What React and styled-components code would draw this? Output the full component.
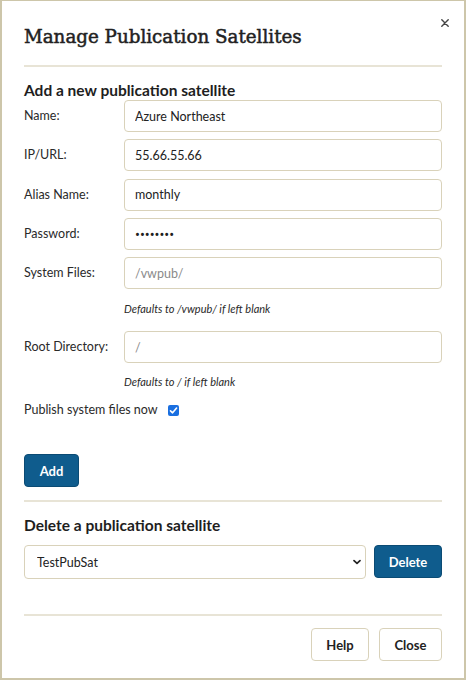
import React from "react";
import styled, { createGlobalStyle } from "styled-components";

const Global = createGlobalStyle`
  html, body { margin: 0; padding: 0; background: #fff; }
  body { font-family: Lato, "Noto Sans", sans-serif; color: #222; }
  * { box-sizing: border-box; }
`;

const SANS = `Lato, "Noto Sans", sans-serif`;

const Dialog = styled.div`
  position: relative;
  width: 466px;
  height: 680px;
  background: #fff;
  border: 1px solid #cdc6aa;
  border-width: 1px 2px 2px 2px;
  padding: 0 22px;
  display: flex;
  flex-direction: column;
`;

const CloseX = styled.button`
  position: absolute;
  top: 15px;
  right: 12px;
  width: 14px;
  height: 14px;
  padding: 0;
  border: 0;
  background: transparent;
  display: flex;
  align-items: center;
  justify-content: center;
  cursor: pointer;
`;

const Title = styled.h1`
  margin: 24px 0 0;
  font-family: "DejaVu Serif", "Liberation Serif", serif;
  font-weight: 400;
  font-size: 18.3px;
  line-height: 24px;
  -webkit-text-stroke: 0.5px #222;
  color: #222;
`;

const Divider = styled.hr`
  margin: ${(p) => p.$mt}px 0 0;
  border: 0;
  height: 2px;
  background: #e8e4d6;
`;

const SectionHeading = styled.h2`
  margin: ${(p) => p.$mt}px 0 0;
  font-family: ${SANS};
  font-weight: 700;
  font-size: 15.5px;
  line-height: 18px;
  color: #1e1e1e;
`;

const Field = styled.div`
  display: grid;
  grid-template-columns: 100px 1fr;
  align-items: center;
  margin-top: ${(p) => p.$mt}px;
`;

const Label = styled.label`
  font-family: ${SANS};
  font-size: 12.5px;
  line-height: 18px;
  color: #2a2a2a;
`;

const TextInput = styled.input`
  display: block;
  height: 32px;
  width: 100%;
  border: 1.5px solid #d9d2ba;
  border-radius: 4px;
  padding: 0 10px;
  font-family: ${(p) => (p.type === "password" ? `"Noto Sans", sans-serif` : SANS)};
  font-size: ${(p) => (p.type === "password" ? 13 : 12.5)}px;
  color: #222;
  background: #fff;
  outline: none;
  &::placeholder { color: #8a8a8a; }
`;

const Hint = styled.div`
  margin: ${(p) => p.$mt}px 0 0 100px;
  font-family: ${SANS};
  font-style: italic;
  font-size: 11px;
  line-height: 14px;
  color: #2a2a2a;
`;

const CheckRow = styled.label`
  margin-top: 12px;
  display: flex;
  align-items: center;
  gap: 10px;
  font-family: ${SANS};
  font-size: 12.5px;
  line-height: 18px;
  color: #2a2a2a;
`;

const CheckBox = styled.span`
  width: 11px;
  height: 11px;
  border-radius: 2px;
  background: #1a6fe0;
  display: inline-flex;
  align-items: center;
  justify-content: center;
`;

const PrimaryButton = styled.button`
  width: ${(p) => p.$w}px;
  height: 33px;
  padding: 0;
  border: 1px solid #0b4b74;
  border-radius: 4px;
  background: #0f5c8d;
  color: #fff;
  font-family: ${SANS};
  font-weight: 700;
  font-size: 13px;
  cursor: pointer;
`;

const AddWrap = styled.div`
  margin-top: 35px;
  display: flex;
`;

const DeleteRow = styled.div`
  margin-top: 11px;
  display: flex;
  gap: 8px;
`;

const SelectWrap = styled.div`
  position: relative;
  flex: 1;
`;

const Select = styled.select`
  display: block;
  width: 100%;
  height: 34px;
  appearance: none;
  border: 1.5px solid #d9d2ba;
  border-radius: 4px;
  padding: 0 28px 0 12px;
  font-family: ${SANS};
  font-size: 12.5px;
  color: #222;
  background: #fff;
  outline: none;
`;

const Chevron = styled.span`
  position: absolute;
  right: 5px;
  top: 50%;
  transform: translateY(-50%);
  display: flex;
  pointer-events: none;
`;

const Footer = styled.div`
  margin-top: 12px;
  display: flex;
  justify-content: flex-end;
  gap: 10px;
`;

const SecondaryButton = styled.button`
  width: ${(p) => p.$w}px;
  height: 33px;
  padding: 0;
  border: 1.5px solid #d9d2ba;
  border-radius: 4px;
  background: #fff;
  color: #222;
  font-family: ${SANS};
  font-weight: 700;
  font-size: 13px;
  cursor: pointer;
`;

const fields = [
  { label: "Name:", value: "Azure Northeast" },
  { label: "IP/URL:", value: "55.66.55.66" },
  { label: "Alias Name:", value: "monthly" },
  { label: "Password:", value: "monthlyp", type: "password" },
];

export default function App() {
  return (
    <>
      <Global />
      <Dialog>
        <CloseX aria-label="Close">
          <svg width="8" height="8" viewBox="0 0 8 8">
            <path d="M0.8 0.8 L7.2 7.2 M7.2 0.8 L0.8 7.2" stroke="#444" strokeWidth="1.4" strokeLinecap="round" />
          </svg>
        </CloseX>
        <Title>Manage Publication Satellites</Title>
        <Divider $mt={16} />
        <SectionHeading $mt={14}>Add a new publication satellite</SectionHeading>
        {fields.map((f, i) => (
          <Field key={f.label} $mt={i === 0 ? 1 : 7.3}>
            <Label>{f.label}</Label>
            <TextInput type={f.type || "text"} defaultValue={f.value} />
          </Field>
        ))}
        <Field $mt={7.3}>
          <Label>System Files:</Label>
          <TextInput placeholder="/vwpub/" />
        </Field>
        <Hint $mt={13}>Defaults to /vwpub/ if left blank</Hint>
        <Field $mt={15}>
          <Label>Root Directory:</Label>
          <TextInput placeholder="/" />
        </Field>
        <Hint $mt={12}>Defaults to / if left blank</Hint>
        <CheckRow>
          Publish system files now
          <CheckBox>
            <svg width="9" height="9" viewBox="0 0 9 9">
              <path d="M1.5 4.8 L3.6 6.8 L7.6 2" fill="none" stroke="#fff" strokeWidth="1.6" strokeLinecap="round" strokeLinejoin="round" />
            </svg>
          </CheckBox>
        </CheckRow>
        <AddWrap>
          <PrimaryButton $w={55}>Add</PrimaryButton>
        </AddWrap>
        <Divider $mt={13} />
        <SectionHeading $mt={14}>Delete a publication satellite</SectionHeading>
        <DeleteRow>
          <SelectWrap>
            <Select defaultValue="TestPubSat">
              <option>TestPubSat</option>
            </Select>
            <Chevron>
              <svg width="8" height="8" viewBox="0 0 8 8">
                <path d="M1 2.6 L4 5.4 L7 2.6" fill="none" stroke="#222" strokeWidth="1.7" strokeLinecap="round" strokeLinejoin="round" />
              </svg>
            </Chevron>
          </SelectWrap>
          <PrimaryButton $w={68}>Delete</PrimaryButton>
        </DeleteRow>
        <Divider $mt={35} />
        <Footer>
          <SecondaryButton $w={58}>Help</SecondaryButton>
          <SecondaryButton $w={63}>Close</SecondaryButton>
        </Footer>
      </Dialog>
    </>
  );
}
